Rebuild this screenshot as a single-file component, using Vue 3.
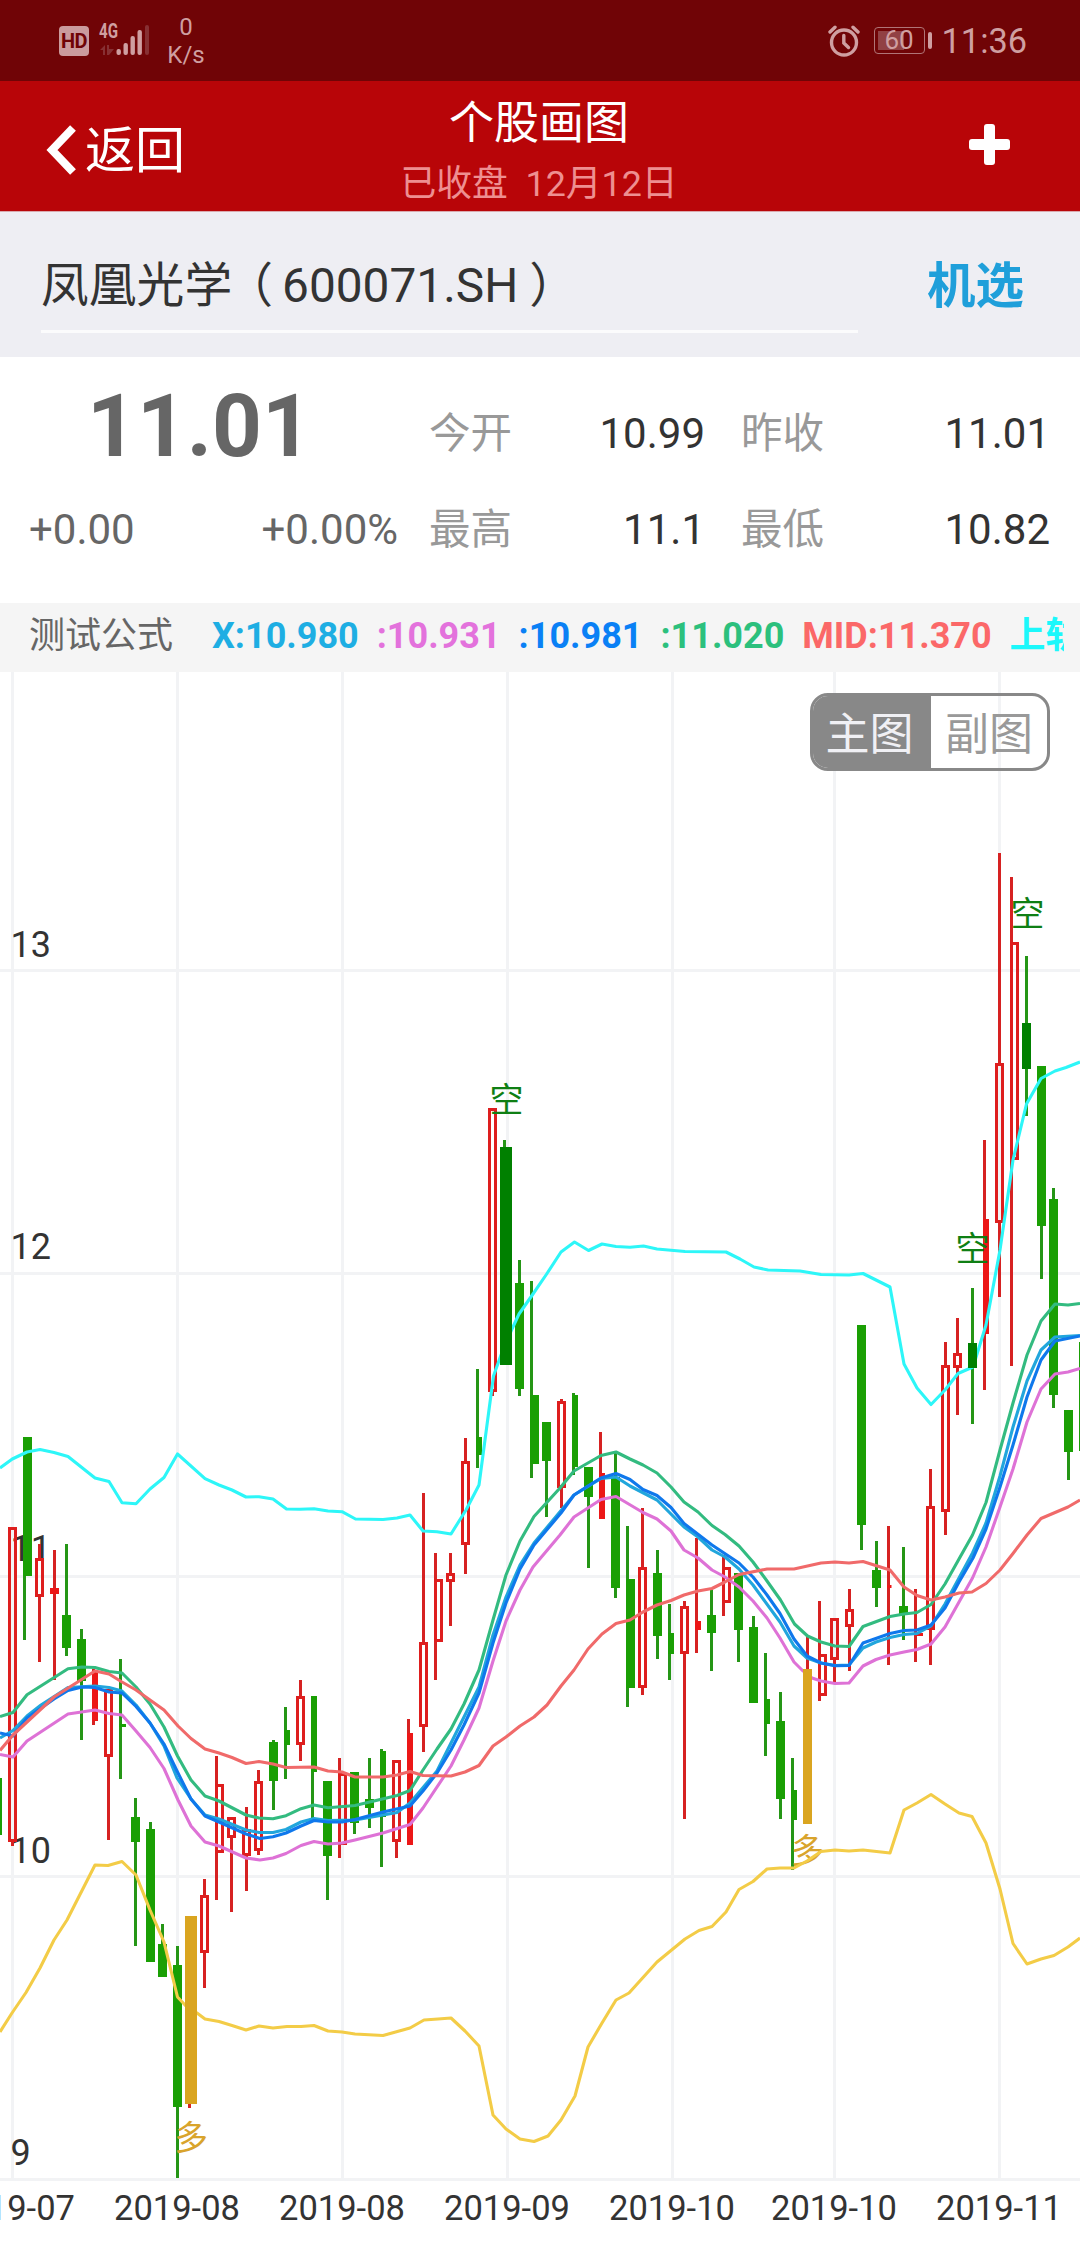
<template>
    <div class="page">
        <div class="status-bar">
            <span class="hd">HD</span>
            <svg class="signal" width="54" height="34" viewBox="0 0 54 34">
                <text class="net" x="0" y="16" textLength="19" lengthAdjust="spacingAndGlyphs">4G</text>
                <g class="dim">
                    <path d="M1 28 L6 23 V33 H4 V28 Z" />
                    <path d="M8 23 H10 V27 H15 L10 33 H8 Z" />
                    <rect x="46" y="3" width="4" height="30" rx="2" />
                </g>
                <rect v-for="(h, i) in [6, 12, 19, 25]" :key="i" class="bar" :x="17.5 + i * 7" :y="33 - h" width="4.4" :height="h" rx="2" />
            </svg>
            <div class="speed">
                <span>0</span>
                <span>K/s</span>
            </div>
            <div class="status-right">
                <svg class="alarm" width="32" height="32" viewBox="0 0 32 32">
                    <circle cx="16" cy="17.5" r="12.5" />
                    <path d="M15.8 10.5 V18 L20.5 22.5" />
                    <path d="M2 7 L7 2.2 M30 7 L25 2.2" />
                </svg>
                <div class="battery">
                    <i class="level"></i>
                    <span>60</span>
                </div>
                <i class="nub"></i>
                <span class="time">11:36</span>
            </div>
        </div>

        <header class="header">
            <a class="back">
                <svg width="34" height="54" viewBox="0 0 34 54">
                    <path d="M28 5 L7 27 L28 49" />
                </svg>
                <span>返回</span>
            </a>
            <div class="heading">
                <h1>个股画图</h1>
                <p>已收盘&nbsp; 12月12日</p>
            </div>
            <a class="add"></a>
        </header>

        <section class="search">
            <div class="stock">凤凰光学<span class="open">（</span>600071.SH<span class="close">）</span></div>
            <a class="random">机选</a>
        </section>

        <section class="quote">
            <div class="quote-row">
                <strong class="price">11.01</strong>
                <span class="label">今开</span>
                <span class="value">10.99</span>
                <span class="label second">昨收</span>
                <span class="value">11.01</span>
            </div>
            <div class="quote-row">
                <div class="change">
                    <span>+0.00</span>
                    <span>+0.00%</span>
                </div>
                <span class="label">最高</span>
                <span class="value">11.1</span>
                <span class="label second">最低</span>
                <span class="value">10.82</span>
            </div>
        </section>

        <section class="formula">
            <span class="name">测试公式</span>
            <div class="indexes">
                <b v-for="item in indexes" :key="item.text" :style="{ color: item.color }">{{ item.text }}</b>
            </div>
        </section>

        <section class="chart">
            <svg width="1080" height="1572" viewBox="0 672 1080 1572">
                <g class="grid">
                    <rect v-for="x in gridX" :key="'x' + x" :x="x" y="672" width="3" height="1507" />
                    <rect v-for="y in gridY" :key="'y' + y" x="0" :y="y" width="1080" height="3" />
                </g>
                <g class="axis">
                    <text v-for="(y, i) in labelY" :key="y" x="10.5" :y="y">{{ 13 - i }}</text>
                </g>
                <g class="axis dates">
                    <text v-for="(d, i) in dates" :key="i" :x="gridX[i] + 1" y="2219.5">{{ d }}</text>
                </g>
                <g v-for="(c, i) in candles" :key="i" :class="c[7]">
                    <rect v-if="c[1] < c[4]" class="wick" :x="c[0]" :y="c[1]" width="3" :height="c[4] - c[1]" />
                    <rect v-if="c[2] > c[5]" class="wick" :x="c[0]" :y="c[5]" width="3" :height="c[2] - c[5]" />
                    <rect v-if="c[7] === 'up'" class="body" :x="c[3] + 1.5" :y="c[4] + 1.5" :width="c[6] - 3" :height="c[5] - c[4] - 3" />
                    <rect v-else class="body" :x="c[3]" :y="c[4]" :width="c[6]" :height="c[5] - c[4]" />
                </g>
                <text v-for="(m, i) in marks" :key="'m' + i" class="mark" :x="m.x" :y="m.y" :fill="m.color">{{ m.text }}</text>
                <polyline v-for="line in lines" :key="line.color" class="line" :points="line.points" :stroke="line.color" />
                <rect v-for="(s, i) in signals" :key="'s' + i" :x="s[0]" :y="s[1]" :width="s[2]" :height="s[3]" :fill="s[4]" />
            </svg>
            <div class="switch">
                <span class="active">主图</span>
                <span>副图</span>
            </div>
        </section>
    </div>
</template>

<script setup>
const indexes = [
    { text: 'X:10.980', color: '#1eaee3' },
    { text: ':10.931', color: '#e372dc' },
    { text: ':10.981', color: '#0a80f5' },
    { text: ':11.020', color: '#2cc07d' },
    { text: 'MID:11.370', color: '#fb6868' },
    { text: '上轨', color: '#1cf8fb' }
];

const gridX = [11, 176, 341, 506, 671, 833, 998];
const gridY = [969, 1272, 1575, 1875, 2178];
const labelY = [956.5, 1259, 1561, 1862.5, 2164.5];
const dates = ['2019-07', '2019-08', '2019-08', '2019-09', '2019-10', '2019-10', '2019-11'];

// wick x, high, low, body x, body top, body bottom, body width, type
const candles = [
    [-4, 1778, 1835, 0, 1778, 1835, 2, 'down'],
    [11, 1527, 1846, 8, 1527, 1842, 9, 'up'],
    [23, 1437, 1640, 23, 1437, 1576, 9, 'down'],
    [38, 1544, 1662, 35, 1558, 1597, 9, 'up'],
    [53, 1550, 1680, 50, 1588, 1594, 9, 'solid'],
    [65, 1544, 1656, 62, 1615, 1648, 9, 'down'],
    [80, 1629, 1740, 77, 1639, 1681, 9, 'down'],
    [92, 1669, 1725, 92, 1671, 1721, 6, 'solid'],
    [107, 1689, 1840, 104, 1689, 1757, 9, 'up'],
    [119, 1659, 1779, 119, 1724, 1727, 7, 'down'],
    [134, 1798, 1946, 131, 1817, 1842, 9, 'down'],
    [149, 1822, 1962, 146, 1829, 1962, 9, 'down'],
    [161, 1924, 1977, 158, 1944, 1977, 9, 'down'],
    [176, 1946, 2178, 173, 1965, 2107, 9, 'down'],
    [188, 1917, 2108, 188, 1917, 2103, 3, 'up'],
    [203, 1879, 1988, 200, 1895, 1953, 9, 'up'],
    [215, 1756, 1900, 215, 1784, 1853, 9, 'up'],
    [230, 1817, 1912, 227, 1817, 1838, 9, 'up'],
    [245, 1807, 1891, 242, 1829, 1856, 9, 'up'],
    [257, 1770, 1855, 254, 1781, 1851, 9, 'up'],
    [272, 1740, 1810, 269, 1742, 1781, 9, 'down'],
    [284, 1707, 1779, 284, 1730, 1745, 6, 'down'],
    [299, 1680, 1761, 296, 1696, 1745, 9, 'up'],
    [311, 1696, 1820, 311, 1696, 1772, 6, 'down'],
    [326, 1781, 1900, 323, 1781, 1856, 9, 'down'],
    [338, 1758, 1858, 338, 1773, 1845, 9, 'up'],
    [353, 1772, 1834, 350, 1772, 1823, 9, 'down'],
    [368, 1758, 1828, 365, 1799, 1808, 9, 'down'],
    [380, 1749, 1867, 380, 1751, 1817, 6, 'down'],
    [395, 1760, 1858, 392, 1760, 1842, 9, 'up'],
    [407, 1719, 1845, 407, 1733, 1845, 6, 'solid'],
    [422, 1493, 1752, 419, 1642, 1727, 9, 'up'],
    [434, 1553, 1680, 434, 1579, 1642, 9, 'up'],
    [449, 1553, 1626, 446, 1573, 1582, 9, 'up'],
    [464, 1438, 1574, 461, 1461, 1545, 9, 'up'],
    [476, 1369, 1468, 476, 1437, 1455, 6, 'down'],
    [491, 1108, 1396, 488, 1108, 1392, 9, 'up'],
    [503, 1140, 1364, 503, 1147, 1364, 9, 'down'],
    [518, 1260, 1396, 515, 1283, 1389, 9, 'down'],
    [530, 1281, 1478, 530, 1395, 1464, 9, 'down'],
    [545, 1422, 1517, 542, 1422, 1461, 9, 'down'],
    [560, 1399, 1508, 557, 1401, 1488, 9, 'up'],
    [572, 1393, 1475, 572, 1395, 1467, 6, 'down'],
    [587, 1467, 1568, 584, 1467, 1497, 9, 'down'],
    [599, 1432, 1519, 599, 1473, 1519, 6, 'solid'],
    [614, 1452, 1598, 611, 1477, 1588, 9, 'down'],
    [626, 1526, 1707, 626, 1579, 1688, 9, 'down'],
    [641, 1508, 1695, 638, 1567, 1688, 9, 'up'],
    [656, 1550, 1659, 653, 1573, 1636, 9, 'down'],
    [668, 1604, 1680, 668, 1633, 1654, 6, 'down'],
    [683, 1601, 1819, 680, 1606, 1654, 9, 'up'],
    [695, 1538, 1653, 695, 1621, 1630, 6, 'solid'],
    [710, 1590, 1671, 707, 1615, 1633, 9, 'down'],
    [722, 1555, 1616, 722, 1567, 1603, 9, 'up'],
    [737, 1573, 1662, 734, 1573, 1630, 9, 'down'],
    [752, 1616, 1703, 749, 1627, 1703, 9, 'down'],
    [764, 1653, 1756, 764, 1699, 1724, 6, 'down'],
    [779, 1692, 1819, 776, 1721, 1799, 9, 'down'],
    [791, 1758, 1870, 791, 1790, 1820, 6, 'down'],
    [806, 1637, 1823, 803, 1669, 1823, 9, 'up'],
    [818, 1601, 1701, 818, 1654, 1696, 9, 'up'],
    [833, 1618, 1683, 830, 1618, 1660, 9, 'up'],
    [848, 1589, 1671, 845, 1609, 1627, 9, 'up'],
    [860, 1325, 1550, 857, 1325, 1525, 9, 'down'],
    [875, 1541, 1607, 872, 1570, 1588, 9, 'down'],
    [887, 1526, 1665, 887, 1585, 1588, 4.5, 'solid'],
    [902, 1547, 1640, 899, 1606, 1615, 9, 'down'],
    [914, 1589, 1662, 914, 1633, 1636, 9, 'solid'],
    [929, 1469, 1665, 926, 1506, 1630, 9, 'up'],
    [944, 1342, 1535, 941, 1365, 1512, 9, 'up'],
    [956, 1318, 1415, 953, 1353, 1368, 9, 'up'],
    [971, 1288, 1424, 968, 1343, 1368, 9, 'down'],
    [983, 1140, 1390, 983, 1219, 1334, 6, 'solid'],
    [998, 853, 1297, 995, 1063, 1223, 9, 'up'],
    [1010, 877, 1366, 1010, 942, 1160, 9, 'up'],
    [1025, 956, 1116, 1022, 1023, 1069, 9, 'down'],
    [1040, 1066, 1279, 1037, 1066, 1226, 9, 'down'],
    [1052, 1188, 1408, 1049, 1199, 1395, 9, 'down'],
    [1067, 1410, 1480, 1064, 1410, 1452, 9, 'down'],
    [1079, 1342, 1451, 1079, 1342, 1451, 3, 'down']
];

// bars painted over a candle where the formula gives a signal
const signals = [
    [185, 1916, 12, 188, '#daa520'],
    [803, 1669, 9, 155, '#daa520'],
    [500, 1147, 12, 218, '#008000'],
    [968, 1343, 9, 25, '#008000'],
    [1022, 1023, 9, 46, '#008000']
];

const marks = [
    { text: '空', x: 506.5, y: 1112, color: '#0f7f14' },
    { text: '空', x: 1027.5, y: 926, color: '#0f7f14' },
    { text: '空', x: 972.5, y: 1261, color: '#0f7f14' },
    { text: '多', x: 191, y: 2149.5, color: '#d9a42c' },
    { text: '多', x: 807.5, y: 1862.5, color: '#d9a42c' }
];

const lines = [
    {
        color: '#21a6dc',
        points: '0,1738 13,1730.5 27,1716 41,1705 68,1687.5 95,1686 109,1687.5 122,1691 136,1705 150,1723 164,1746 177,1778 191,1799 205,1815 219,1819 246,1830 259,1832.5 273,1832.5 286,1829.5 301,1822 314,1818.5 328,1820.5 355,1820 397,1812.5 410,1803 437,1771 451,1743 464,1717 479,1687 493,1635 506,1597 520,1565 534,1543 574,1495 601,1478.5 616,1477 630,1486 657,1500 684,1527 698,1537 712,1550 725,1557 739,1569 753,1585 780,1622 794,1646 807,1658 821,1663 835,1665.5 849,1665 863,1648 876,1642 890,1637.5 904,1634.5 917,1633.5 931,1626 945,1604 959,1578 972.5,1553 986,1523 1000,1476 1013,1427 1027,1381 1041,1350 1055,1337 1080,1335.5'
    },
    {
        color: '#de72d6',
        points: '0,1754.5 13,1757 27,1741 68,1714 95,1710 109,1713.5 122,1715 136,1731 150,1747.5 164,1768.5 178,1800 191,1826 205,1842 219,1846 246,1858 260,1860 273,1858 286,1853.5 301,1845.5 314,1841.5 328,1844 342,1843 355,1840 383,1833 410,1824.5 423,1808 451,1766 464,1740 479,1708 493,1661 506,1621 520,1590 533,1567 560,1535 574,1517 601,1499.5 616,1496.5 643,1512.5 657,1519 671,1531 684,1550 698,1558 712,1570 725,1577 739,1587 753,1601 767,1618 780,1638 794,1662 802,1670 812,1678 821,1681 835,1683.5 849,1683 863,1666 876,1659.5 890,1655 904,1652 917,1649.5 931,1644 945,1627 972.5,1578 986,1547 1000,1507 1013,1469 1027,1422 1041,1389 1055,1374 1068,1372 1080,1368.5'
    },
    {
        color: '#0f78ec',
        points: '0,1733 13,1736 27,1718 54,1699 68,1690.5 82,1687 95,1687.5 109,1692 122,1693 136,1706.5 150,1723 164,1744 177,1771 191,1799 205,1816 219,1822 246,1834 260,1838.5 273,1836.7 286,1833 301,1826 314,1820.5 328,1822 342,1822 355,1819.5 383,1812 410,1806 423,1791 437,1773 451,1750 464,1725 479,1693 493,1643 506,1603 520,1569 534,1545 561,1513 574,1495 588,1486 601,1478 616,1473.5 630,1479.5 643,1489.5 657,1495.5 671,1507.5 684,1523.5 712,1545 739,1563 753,1577 767,1595 780,1613.5 794,1639 807,1656 821,1663 835,1665.7 849,1665.5 863,1643 890,1633.5 904,1630.5 917,1630 931,1625 945,1608 959,1582 973,1558 986,1529 1000,1487 1013,1445 1027,1397 1041,1360 1055,1341 1080,1336'
    },
    {
        color: '#33bb80',
        points: '0,1716.5 13,1712.5 27,1694.7 68,1668.7 82,1667 95,1667.5 109,1671.5 122,1673 136,1687 150,1704 164,1727 177.5,1756 191,1780 205,1796 219,1801 246,1815 259,1818 273,1818.7 286,1815.7 301,1808.7 314,1805 328,1807.7 355,1805.5 397,1795.5 410,1790.5 423,1770 437,1749 451,1729 464,1704 479,1670 493,1620 506,1575 520,1541 534,1516.5 560,1488 574,1471 601,1455.5 616,1452 630,1459 643,1465 657,1473 671,1487 684,1502 698,1512 712,1525.5 725,1534.5 739,1546 753,1562 767,1581 780.5,1600 794.5,1624 807.5,1636 821,1642 835,1646 849,1646.5 863,1626.5 890,1616.5 904,1614 917,1612.5 931,1604.5 945,1584 959,1559 972.5,1535 986,1502.5 1000,1450 1013,1403 1027,1355 1041,1321 1055,1304 1068,1305 1080,1303.5'
    },
    {
        color: '#f06a6a',
        points: '0,1750.5 13,1735 27,1722 54,1697 95,1671 109,1674 122,1682 136,1690 164,1710 178,1726 191,1738.5 205,1749 219,1753 232,1757.5 246,1763.5 259,1761.5 273,1764 286,1767.5 314,1767 328,1771 342,1772 355,1777 383,1777 397,1775 410,1771.5 423,1775.5 451,1776 465,1772 479,1765.5 493,1746 506,1737 520,1726 534,1717 547,1705 561,1686 574,1670 588,1649 602,1634 616,1623.5 630,1620 643,1612 657,1605 671,1600.5 684,1595 698,1591 712,1588.5 725,1582 739,1574.5 767,1569 794,1569 821,1563 835,1562 849,1563 863,1561.5 890,1570 904,1587 917,1595.5 931,1600 945,1597 959,1593 972,1592 986,1583.5 1000,1570 1013,1553.5 1027,1535 1041,1518.5 1068,1507 1080,1500'
    },
    {
        color: '#2df6f8',
        points: '0,1468 12.3,1459 27,1452 40,1449.5 54,1452.5 68,1456.5 95,1478 109,1481.5 122,1502.7 136,1503.7 150,1489 164,1477.5 177.5,1454 205,1478.7 219,1485 232,1490 246,1497 259,1496.7 273,1499 286.5,1509 300,1509.3 314,1508.7 328,1511 342,1511.7 355.5,1519 383,1519.5 397,1518 410,1515 423,1531 437,1531.7 451,1534 466,1510 479,1485 493.5,1376 501,1355 512,1329 519,1314 533,1294 547,1273.5 561,1252 574.5,1242 588.5,1250.5 602,1244 616,1246.5 630,1247.3 643.5,1246 657,1249 685,1251.5 726,1252 740,1259 754,1267 768,1270 800,1271 821,1274.5 849,1275 863,1273.5 890,1287 904,1364 917,1388 931,1404.5 945,1390 958,1373.5 973,1367 986,1325 1000,1250 1013,1160 1026.5,1104 1041,1078.5 1055,1071 1066,1067.5 1080,1062'
    },
    {
        color: '#f3cc47',
        points: '0,2032 12,2013 26,1992.5 40,1968 54,1940 67,1920 95,1865 108,1865.5 122,1861.5 136,1875 150,1910 164,1942 177.5,1997 186,2006 197,2013 205,2019 219,2021.5 232,2025.5 246,2030 259,2026 273,2028 287,2026.5 301,2026.5 314,2025.5 328,2031 342,2032 355,2034 383,2035.5 410,2028 424,2020 438,2019 451,2018 465,2031 479,2046 493,2115 506,2129 520,2139 534,2141.5 548,2136 561,2120 575,2096 588,2047 602,2023 616,2000 629,1993 657,1962 671,1950.5 685,1939 699,1930.5 712,1926.5 726,1912 739,1889.5 753,1881.5 767,1869 780,1868 794,1868 807,1861 821,1851.5 835,1850 849,1851 863,1850 890,1853 904,1810 917,1803 931,1794.5 945,1804 959,1813 972,1816.5 986,1843 1000,1889 1013,1943.5 1027,1964 1041,1959 1054,1955.5 1068,1947 1080,1938'
    }
];
</script>

<style>
body {
    background: #fff;
}
</style>

<style scoped>
.page {
    width: 1080px;
    height: 2244px;
    overflow: hidden;
    background: #fff;
    font-family: Roboto, "Noto Sans CJK SC", sans-serif;
    color: #333;
}

.page * {
    box-sizing: border-box;
}

.status-bar {
    display: flex;
    align-items: flex-start;
    height: 81px;
    padding-left: 59px;
    background: #700406;
    color: #cf9fa1;
}

.hd {
    width: 30px;
    height: 30px;
    margin-top: 26px;
    border-radius: 4px;
    background: #cb9b9d;
    color: #700406;
    font-size: 20px;
    font-weight: 700;
    line-height: 31px;
    text-align: center;
    letter-spacing: -0.5px;
}

.signal {
    margin: 22px 0 0 10px;
    overflow: visible;
}

.net {
    font-size: 20px;
    font-weight: 700;
    fill: #cf9fa1;
}

.bar {
    fill: #cf9fa1;
}

.dim {
    fill: #873033;
}

.speed {
    display: flex;
    flex-direction: column;
    align-items: center;
    width: 36px;
    margin: 14px 0 0 15px;
    font-size: 24px;
    line-height: 27.5px;
}

.status-right {
    display: flex;
    align-items: center;
    height: 81px;
    margin-left: auto;
    padding-right: 53px;
}

.alarm {
    margin-right: 14px;
    fill: none;
    stroke: #cf9fa1;
    stroke-width: 3.4;
    stroke-linecap: round;
}

.battery {
    position: relative;
    width: 51px;
    height: 27px;
    border: 1.5px solid #b07476;
    border-radius: 4px;
    font-size: 26px;
    line-height: 25px;
    text-align: center;
}

.level {
    position: absolute;
    left: 3px;
    top: 3px;
    width: 26px;
    height: 19px;
    background: #914144;
}

.battery span {
    position: relative;
}

.nub {
    width: 4px;
    height: 17px;
    margin: 0 10px 0 3px;
    border-radius: 2px;
    background: #cf9fa1;
}

.time {
    font-size: 34.3px;
    line-height: 40px;
}

.header {
    display: grid;
    grid-template-columns: 300px 1fr 300px;
    height: 131px;
    border-bottom: 1px solid #d9a9ae;
    background: #b80508;
    color: #fff;
}

.back {
    display: flex;
    align-items: center;
    padding: 8px 0 0 45px;
    font-size: 50px;
    line-height: 62px;
}

.back svg {
    margin-right: 6px;
    fill: none;
    stroke: #fff;
    stroke-width: 8;
    stroke-linejoin: miter;
}

.back span {
    padding-top: 2px;
}

.heading {
    padding-top: 16px;
    margin-left: -2px;
    text-align: center;
}

.heading h1 {
    margin: 0;
    font-size: 45px;
    font-weight: 400;
    line-height: 54px;
}

.heading p {
    margin: 11px 0 0;
    color: #ee8f91;
    font-size: 35.8px;
    line-height: 44px;
}

.add {
    position: relative;
    justify-self: end;
    width: 41px;
    height: 41px;
    margin: 43px 70px 0 0;
}

.add::before,
.add::after {
    position: absolute;
    border-radius: 3px;
    background: #fff;
    content: "";
}

.add::before {
    inset: 15px 0;
}

.add::after {
    inset: 0 15px;
}

.search {
    display: flex;
    justify-content: space-between;
    height: 145px;
    padding: 38px 56px 0 41px;
    background: #eeeef3;
}

.stock {
    width: 817px;
    height: 83px;
    border-bottom: 3px solid #fbfbfc;
    font-size: 47.8px;
    line-height: 73px;
}

.stock .open {
    margin: 0 9px 0 -7px;
}

.stock .close {
    margin-left: 11px;
}

.random {
    color: #1f9fda;
    font-size: 48.5px;
    font-weight: 700;
    line-height: 74px;
}

.quote {
    height: 246px;
    padding: 28px 30px 0;
    font-size: 42px;
    line-height: 49px;
    white-space: nowrap;
}

.quote-row {
    display: grid;
    grid-template-columns: 399px 83px 193px 118px 1fr;
    align-items: center;
    height: 96px;
}

.price {
    padding-left: 57px;
    color: #666;
    font-size: 87px;
    line-height: 80px;
    margin-top: -15px;
}

.change {
    display: flex;
    justify-content: space-between;
    margin-left: -1px;
    padding-right: 31px;
    color: #666;
}

.label {
    color: #999;
    font-size: 41.5px;
}

.label.second {
    padding-left: 36px;
}

.value {
    text-align: right;
}

.formula {
    display: flex;
    height: 69px;
    padding: 0 16px 0 29px;
    background: #f5f5f5;
    font-size: 36px;
    line-height: 66px;
    white-space: nowrap;
}

.name {
    width: 183px;
    flex: none;
    color: #666;
}

.indexes {
    display: flex;
    flex: 1;
    min-width: 0;
    gap: 18px;
    overflow: hidden;
}

.chart {
    position: relative;
    height: 1572px;
}

.chart svg {
    display: block;
}

.grid {
    fill: #f2f3f5;
}

.axis {
    fill: #333;
    font-size: 36px;
}

.dates {
    font-size: 34.5px;
    text-anchor: middle;
}

.mark {
    font-size: 34px;
    text-anchor: middle;
}

.line {
    fill: none;
    stroke-width: 3.1;
    stroke-linejoin: round;
}

.up .wick,
.solid .wick {
    fill: #d62222;
}

.up .body {
    fill: none;
    stroke: #de1e1e;
    stroke-width: 3;
}

.solid .body {
    fill: #ec1717;
}

.down .wick {
    fill: #259616;
}

.down .body {
    fill: #1a9f04;
}

.switch {
    position: absolute;
    top: 21px;
    right: 30px;
    display: flex;
    width: 240px;
    height: 78px;
    border: 3px solid #888;
    border-radius: 18px;
    overflow: hidden;
    color: #999;
    font-size: 44px;
    line-height: 78px;
    text-align: center;
}

.switch span {
    flex: 1;
}

.switch .active {
    flex: 0 0 118px;
    padding-right: 5px;
    background: #888;
    color: #f0f0f4;
}
</style>
